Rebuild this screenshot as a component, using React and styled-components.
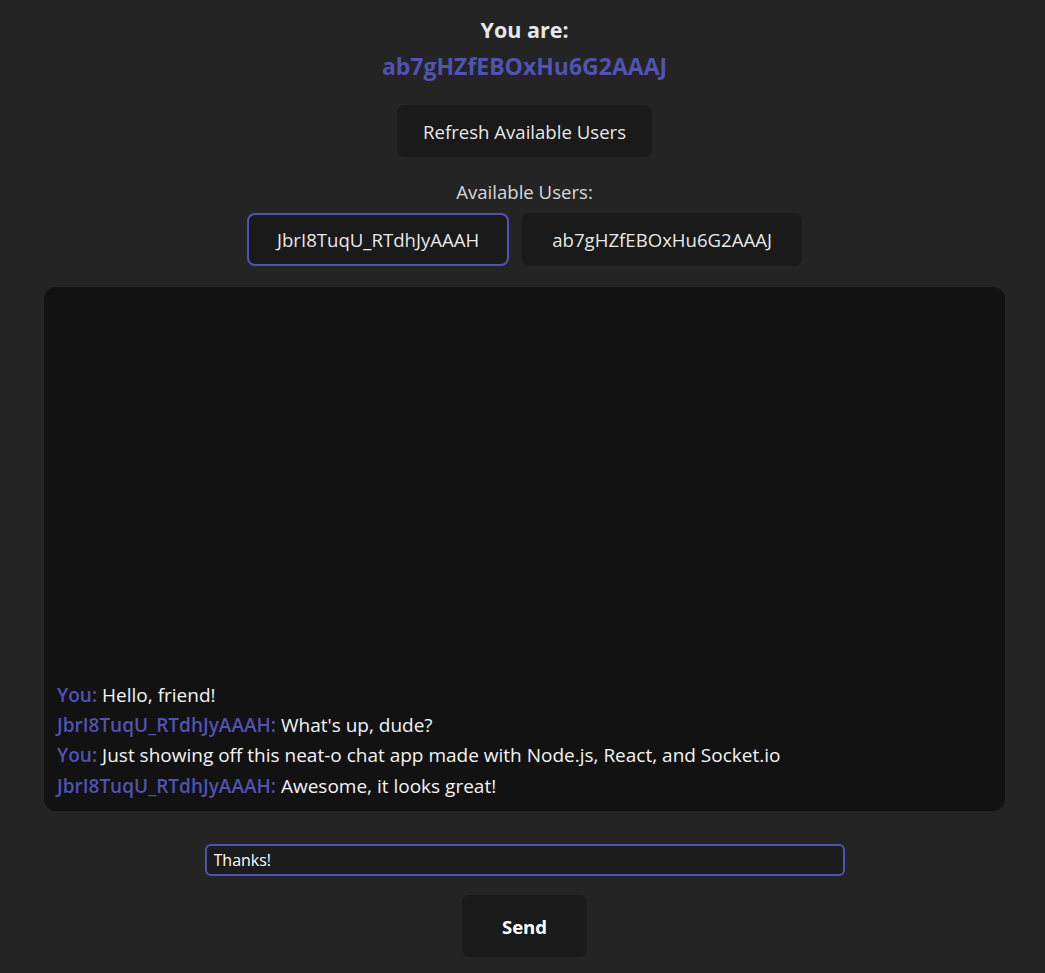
import React, { useState } from 'react'
import styled, { createGlobalStyle } from 'styled-components'

const GlobalStyle = createGlobalStyle`
  html, body {
    margin: 0;
    padding: 0;
    background: #242424;
  }
  body {
    font-family: "Open Sans", "Noto Sans", sans-serif;
    color: rgba(255, 255, 255, 0.87);
    font-size: 18px;
  }
`;

const Page = styled.div`
  display: flex;
  flex-direction: column;
  align-items: center;
  padding: 16px 40px 16px 44px;
  box-sizing: border-box;
  width: 1045px;
  min-height: 973px;
`;

const Title = styled.div`
  font-size: 21.5px;
  font-weight: 700;
  line-height: 28px;
  color: #e8e8e8;
`;

const MyId = styled.div`
  font-size: 23px;
  font-weight: 700;
  line-height: 28px;
  margin-top: 8px;
  color: #5053b3;
`;

const Button = styled.button`
  font-family: inherit;
  font-size: 18.6px;
  font-weight: ${p => (p.$bold ? 700 : 400)};
  color: ${p => (p.$bold ? '#fff' : 'rgba(255,255,255,0.92)')};
  background: #1a1a1a;
  border: 2px solid ${p => (p.$active ? '#5053b3' : 'transparent')};
  border-radius: 8px;
  padding: 0 ${p => p.$px || 24}px;
  height: ${p => p.$h || 52}px;
  cursor: pointer;
`;

const RefreshWrap = styled.div`
  margin-top: 25px;
`;

const Label = styled.div`
  margin-top: 20px;
  font-size: 18.6px;
  line-height: 30px;
  color: #d8d8d8;
`;

const UserRow = styled.div`
  display: flex;
  gap: 13px;
  margin-top: 6px;
`;

const ChatBox = styled.div`
  margin-top: 21px;
  width: 961px;
  height: 524px;
  box-sizing: border-box;
  background: #121212;
  border-radius: 12px;
  display: flex;
  flex-direction: column;
  justify-content: flex-end;
  padding: 0 13px 10px;
`;

const Message = styled.div`
  font-size: 19px;
  line-height: 30.3px;
  color: #f4f4f4;
`;

const Sender = styled.span`
  color: #5053b3;
  font-weight: 600;
`;

const Input = styled.input`
  margin-top: 33px;
  width: 640px;
  height: 32px;
  box-sizing: border-box;
  background: #1c1c1c;
  border: 2px solid #5053b3;
  border-radius: 6px;
  color: #fff;
  font-family: inherit;
  font-size: 16px;
  padding: 0 7px;
  outline: none;
`;

const SendWrap = styled.div`
  margin-top: 19px;
`;

const messages = [
  { from: 'You', text: 'Hello, friend!' },
  { from: 'JbrI8TuqU_RTdhJyAAAH', text: "What's up, dude?" },
  { from: 'You', text: 'Just showing off this neat-o chat app made with Node.js, React, and Socket.io' },
  { from: 'JbrI8TuqU_RTdhJyAAAH', text: 'Awesome, it looks great!' },
];

const users = ['JbrI8TuqU_RTdhJyAAAH', 'ab7gHZfEBOxHu6G2AAAJ'];

export default function App() {
  const [selected, setSelected] = useState(users[0]);
  const [draft, setDraft] = useState('Thanks!');

  return (
    <Page>
      <GlobalStyle />
      <Title>You are:</Title>
      <MyId>ab7gHZfEBOxHu6G2AAAJ</MyId>
      <RefreshWrap>
        <Button>Refresh Available Users</Button>
      </RefreshWrap>
      <Label>Available Users:</Label>
      <UserRow>
        {users.map(u => (
          <Button key={u} $h={53} $px={28} $active={u === selected} onClick={() => setSelected(u)}>
            {u}
          </Button>
        ))}
      </UserRow>
      <ChatBox>
        {messages.map((m, i) => (
          <Message key={i}>
            <Sender>{m.from}:</Sender> {m.text}
          </Message>
        ))}
      </ChatBox>
      <Input value={draft} onChange={e => setDraft(e.target.value)} />
      <SendWrap>
        <Button $bold $px={38} $h={62}>Send</Button>
      </SendWrap>
    </Page>
  )
}
